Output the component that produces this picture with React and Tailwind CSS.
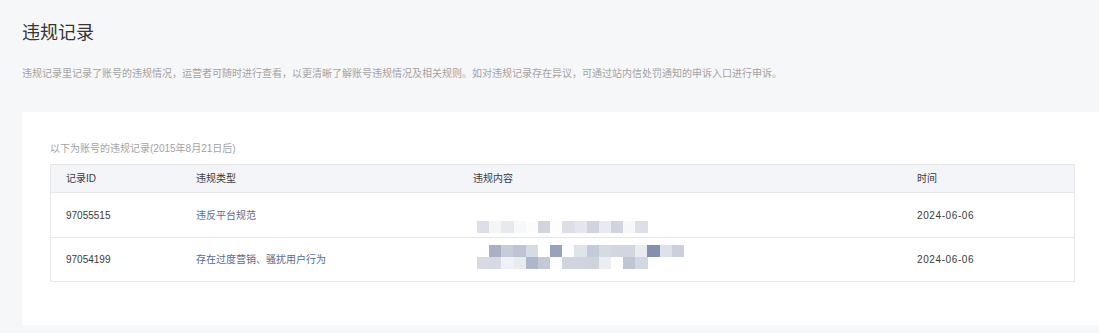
const font = { fontFamily: '"Liberation Sans", "Noto Sans CJK SC", sans-serif' };

// Mosaic tiles covering the masked content of each record
const row1Tiles = ['#dcdfe8', '#f4f5f7', '#e8e9ef', '#f7f8fa', '#fcfcfd', '#d0d4df', '#fdfdfd', '#dcdfe8', '#e4e6ed', '#d0d4df', '#e9eaef', '#d0d4df', '#f6f7f9', '#dcdfe8'];
const row2TilesA = ['#a8afc6', '#c6ccda', '#bec4d4', '#d6dce3', '#ffffff', '#97a2be', '#fdfdfd', '#dfe3ea', '#c3cad9', '#d6dae3', '#d2d6e1', '#d2d6e1', '#ebecf1', '#8390b0', '#dde1e8', '#cad0dc'];
const row2TilesB = ['#d7dae3', '#d7dae3', '#f0f1f5', '#e9ebf0', '#aeb6cc', '#c3c9d6', '#fdfdfd', '#cfd4df', '#d0d4df', '#cfd3de', '#ecedf2', '#ffffff', '#c0c6d5', '#d3d7e1'];

function Tiles({ colors, className = '' }) {
  return (
    <div className={`flex ${className}`}>
      {colors.map((c, i) => (
        <div key={i} className="w-[12.2px] h-[12px] shrink-0" style={{ backgroundColor: c }} />
      ))}
    </div>
  );
}

const cols = 'grid grid-cols-[130px_277px_444px_1fr]';

export default function App() {
  return (
    <div className="w-[1099px] h-[333px] bg-[#f6f7f9] overflow-hidden" style={font}>
      <div className="pl-[22px] pt-[20px]">
        <h1 className="text-[18px] leading-[26px] text-[#353535] font-normal">违规记录</h1>
        <p className="mt-[20px] text-[10px] leading-[16px] text-[#a3a3a3]">
          违规记录里记录了账号的违规情况，运营者可随时进行查看，以更清晰了解账号违规情况及相关规则。如对违规记录存在异议，可通过站内信处罚通知的申诉入口进行申诉。
        </p>
      </div>

      <div className="ml-[22px] mt-[30px] bg-white pt-[29px] pl-[28px] pr-[24px] pb-[43px]">
        <p className="text-[10px] leading-[16px] text-[#a3a3a3]">以下为账号的违规记录(2015年8月21日后)</p>

        <div className="mt-[7px] border border-[#e7e7eb] text-[10px] text-[#3a3a3a]">
          <div className={`${cols} h-[28px] items-center bg-[#f4f5f9] border-b border-[#e7e7eb]`}>
            <div className="pl-[15px]">记录ID</div>
            <div className="pl-[15px]">违规类型</div>
            <div className="pl-[15px]">违规内容</div>
            <div className="pl-[15px]">时间</div>
          </div>

          <div className={`${cols} h-[45px] items-center border-b border-[#e7e7eb]`}>
            <div className="pl-[15px]">97055515</div>
            <div className="pl-[15px] text-[#576b95]">违反平台规范</div>
            <div className="pl-[19px] self-start pt-[28px]">
              <Tiles colors={row1Tiles} />
            </div>
            <div className="pl-[15px] tracking-[0.6px]">2024-06-06</div>
          </div>

          <div className={`${cols} h-[43px] items-center`}>
            <div className="pl-[15px]">97054199</div>
            <div className="pl-[15px] text-[#576b95]">存在过度营销、骚扰用户行为</div>
            <div className="pl-[19px] self-start pt-[7px]">
              <Tiles colors={row2TilesA} className="ml-[12px]" />
              <Tiles colors={row2TilesB} />
            </div>
            <div className="pl-[15px] tracking-[0.6px]">2024-06-06</div>
          </div>
        </div>
      </div>
    </div>
  );
}
